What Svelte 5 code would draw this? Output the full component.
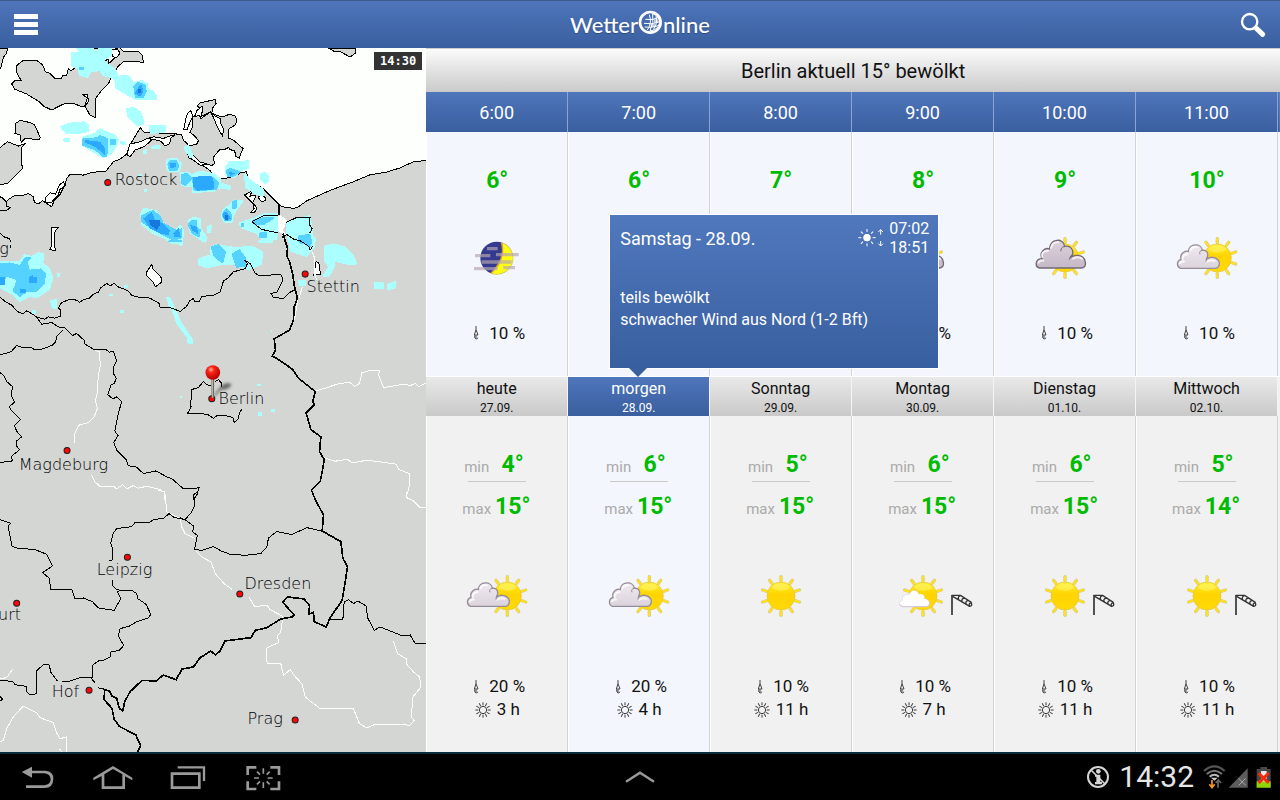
<script>
  const hours = [
    { time: '6:00', temp: '6°', sky: 'moon', rain: '10 %' },
    { time: '7:00', temp: '6°', sky: 'moon', rain: '10 %' },
    { time: '8:00', temp: '7°', sky: 'overcast', rain: '10 %' },
    { time: '9:00', temp: '8°', sky: 'overcast', rain: '10 %' },
    { time: '10:00', temp: '9°', sky: 'overcast', rain: '10 %' },
    { time: '11:00', temp: '10°', sky: 'cloudy', rain: '10 %' }
  ];

  const days = [
    { name: 'heute', date: '27.09.', min: '4°', max: '15°', sky: 'cloudy', rain: '20 %', sun: '3 h' },
    { name: 'morgen', date: '28.09.', min: '6°', max: '15°', sky: 'cloudy', rain: '20 %', sun: '4 h' },
    { name: 'Sonntag', date: '29.09.', min: '5°', max: '15°', sky: 'sunny', rain: '10 %', sun: '11 h' },
    { name: 'Montag', date: '30.09.', min: '6°', max: '15°', sky: 'fair', wind: true, rain: '10 %', sun: '7 h' },
    { name: 'Dienstag', date: '01.10.', min: '6°', max: '15°', sky: 'sunny', wind: true, rain: '10 %', sun: '11 h' },
    { name: 'Mittwoch', date: '02.10.', min: '5°', max: '14°', sky: 'sunny', wind: true, rain: '10 %', sun: '11 h' }
  ];

  const cities = [
    { name: 'Rostock', x: 344, y: 410, dx: 323, dy: 403 },
    { name: 'Stettin', x: 919, y: 733, dx: 915, dy: 678 },
    { name: 'Berlin', x: 655, y: 1066, dx: 635, dy: 1052 },
    { name: 'Magdeburg', x: 56, y: 1264, dx: 201, dy: 1207 },
    { name: 'Leipzig', x: 290, y: 1579, dx: 382, dy: 1527 },
    { name: 'Dresden', x: 733, y: 1621, dx: 719, dy: 1637 },
    { name: 'urt', x: -6, y: 1714, dx: 50, dy: 1665 },
    { name: 'Hof', x: 155, y: 1947, dx: 267, dy: 1926 },
    { name: 'Prag', x: 742, y: 2026, dx: 885, dy: 2015 }
  ];

  const rays = [0, 36, 72, 108, 144, 180, 216, 252, 288, 324];
  const rays8 = [0, 45, 90, 135, 180, 225, 270, 315];
  const rays12 = [0, 30, 60, 90, 120, 150, 180, 210, 240, 270, 300, 330];

  let selected = $state(1);
</script>

{#snippet sunShape(cx)}
  <g transform="translate({cx} 66)">
    {#each rays as r}
      <line y1="-46" y2="-58" stroke="#d8cb86" stroke-width="10" stroke-linecap="round" transform="rotate({r})" />
      <line y1="-44" y2="-58" stroke="#ffe21c" stroke-width="6" stroke-linecap="round" transform="rotate({r})" />
    {/each}
    <circle r="42" fill="url(#sun)" stroke="#e6c13c" stroke-width="2" />
    <ellipse cx="0" cy="-27" rx="26" ry="11" fill="#fff36a" opacity=".6" />
  </g>
{/snippet}

{#snippet sky(kind, wind)}
  <svg class="sky" viewBox="0 0 300 132" aria-hidden="true">
    {#if kind === 'sunny'}
      {@render sunShape(150)}
    {:else if kind === 'fair'}
      {@render sunShape(150)}
      <path d="M90 100C76 99 74 82 89 79C84 64 100 57 108 63C114 42 136 46 138 61C148 57 157 64 155 74C172 74 178 96 160 100Z" fill="#d9ccd6" />
      <path d="M90 96C78 95 76 82 90 79C85 66 100 58 108 64C114 44 135 48 137 62C148 58 156 65 154 75C169 75 174 93 160 96Z" fill="#fff" />
    {:else if kind === 'cloudy'}
      {@render sunShape(181)}
      <path d="M70 97C58 92 58 73 73 70C66 57 82 42 94 46C96 21 134 21 136 43C148 41 155 51 151 63L148 71C161 57 184 66 187 80C188 89 182 97 176 97Z" fill="url(#paleCloud)" stroke="#958c98" stroke-width="4" />
      <path d="M77 70Q75 57 92 54M100 43Q107 30 119 34M151 77Q164 69 173 75M69 82Q73 76 81 77" fill="none" stroke="#fff" stroke-width="6" stroke-linecap="round" opacity=".8" />
      <path d="M136 43Q125 45 129 55M151 63Q147 69 147 77" fill="none" stroke="#958c98" stroke-width="3" />
    {:else if kind === 'overcast'}
      {@render sunShape(150)}
      <path d="M73 96C59 93 60 68 81 68C72 50 88 33 103 39C107 6 145 5 149 31C167 27 176 41 173 55L165 65C187 51 211 60 211 81C213 89 207 96 199 96Z" fill="url(#greyCloud)" stroke="#726975" stroke-width="4" />
      <path d="M82 63Q77 46 99 44M108 36Q113 17 130 19M174 68Q191 60 201 68M71 80Q74 71 85 74" fill="none" stroke="#fff" stroke-width="6" stroke-linecap="round" opacity=".75" />
      <path d="M149 31Q136 34 138 46M172 56Q165 61 163 71" fill="none" stroke="#726975" stroke-width="3" />
    {:else}
      <circle cx="149" cy="66" r="49" fill="#353a91" />
      <path d="M164 20C205 33 211 89 172 109C158 117 144 116 132 112C160 90 172 60 164 20Z" fill="#fffc18" stroke="#d8cf54" stroke-width="2" />
      <path d="M164 20Q177 67 132 112" fill="none" stroke="#d9a21d" stroke-width="4" />
      <path d="M120 38H152M84 59H130M147 56H215M104 78H194M81 98H152M169 95H204" stroke="#b7a7af" stroke-width="10" opacity=".68" />
    {/if}
    {#if wind}
      <g fill="none" stroke="#333" stroke-width="4">
        <path d="M237 63V123" stroke-width="5" />
        <path d="M236 64H263L296 86M239 67L290 97M263 64Q253 68 257 77M274 72Q263 75 268 84M285 80Q275 82 280 91" />
        <path d="M295 86Q299 96 290 97Q285 89 295 86" />
      </g>
    {/if}
  </svg>
{/snippet}

{#snippet drop()}
  <svg class="drop" viewBox="0 0 18 42" aria-label="Niederschlag" role="img">
    <path d="M9 0V11L4 27H15L9 11M5 28Q4 38 9 39Q15 39 14 35M9 28V36" fill="none" stroke="#444" stroke-width="3" />
  </svg>
{/snippet}

{#snippet city(c)}
  <text x={c.x} y={c.y} class="city">{c.name}</text>
  <circle cx={c.dx} cy={c.dy} r="9" fill="#ff0505" stroke="#1d1d1d" stroke-width="3" />
{/snippet}

<svg class="defs" aria-hidden="true">
  <defs>
    <linearGradient id="sun" x2="0" y2="1">
      <stop offset="0" stop-color="#fff02a" />
      <stop offset=".45" stop-color="#ffd400" />
      <stop offset="1" stop-color="#ffd908" />
    </linearGradient>
    <linearGradient id="paleCloud" x2="0" y2="1">
      <stop offset="0" stop-color="#efe9ef" />
      <stop offset="1" stop-color="#dcd3dd" />
    </linearGradient>
    <linearGradient id="greyCloud" x2="0" y2="1">
      <stop offset="0" stop-color="#dcd2dc" />
      <stop offset="1" stop-color="#c5b8c7" />
    </linearGradient>
    <radialGradient id="ball" cx=".38" cy=".3" r=".7">
      <stop offset="0" stop-color="#ffb3a2" />
      <stop offset=".3" stop-color="#fb2718" />
      <stop offset="1" stop-color="#b40000" />
    </radialGradient>
    <filter id="soft" x="-50%" y="-50%" width="200%" height="200%"><feGaussianBlur stdDeviation="5" /></filter>
  </defs>
</svg>

<div class="app">
  <header class="topbar">
    <button class="menu" aria-label="Menü"><span></span><span></span><span></span></button>
    <h1 class="logo">
      <span>Wetter</span>
      <svg viewBox="0 0 75 78" aria-label="O" role="img">
        <circle cx="37" cy="40" r="31" fill="none" stroke="#fff" stroke-width="8" />
        <path d="M44 14Q66 22 64 43Q59 65 36 65Q49 40 44 14M22 31Q43 35 63 25M18 43Q42 48 65 38M20 54Q40 58 61 50M34 17Q43 43 28 63M54 20Q60 45 46 62" fill="none" stroke="#fff" stroke-width="3" />
        <path d="M48 31H60V42H48ZM38 44H52V54H38Z" fill="#fff" opacity=".6" />
      </svg>
      <span>nline</span>
    </h1>
    <button class="search" aria-label="Suche">
      <svg viewBox="0 0 78 78"><circle cx="29" cy="29" r="23" fill="none" stroke="#fff" stroke-width="7" /><path d="M50 50L68 67" stroke="#fff" stroke-width="15" stroke-linecap="round" /></svg>
    </button>
  </header>

  <main>
    <section class="map" aria-label="Regenradar">
      <svg viewBox="0 0 1278 2112" preserveAspectRatio="xMinYMin slice" shape-rendering="crispEdges">
        <rect width="1278" height="2112" fill="#fdfffd" />
        <!-- coast and islands -->
        <g transform="translate(0 -144)">
          <g fill="#d4d6d4" stroke="#000" stroke-width="3">
            <path d="M-5 588L8 592L18 605L30 595L45 586L68 586L85 580L100 590L103 607L114 612L128 602L140 610L155 620L163 600L180 583L195 553L200 535L210 523L250 525L275 517L318 513L328 500L340 485L360 477L380 462L388 438L415 392L421 383L432 397L525 401L545 405L550 421L563 432L560 455L567 474L600 490L630 512L650 537L656 553L663 536L700 531L722 518L738 515L745 535L760 547L790 566L835 612L845 620L880 625L895 620L920 602L990 571L1062 544L1110 524L1160 516L1198 504L1240 485L1283 481V2300H-5Z" />
            <path d="M-5 447L22 425L55 438L78 430L65 441V492L68 505L22 550L-5 555Z" />
            <path d="M45 400L46 371L60 361L92 368L104 375L121 413L117 419L75 415L64 427L60 405Z" />
            <path d="M50 197L67 183L110 181L128 195L136 215L150 220L165 235L182 237L190 225L200 227L205 205L213 213L228 200L221 185L235 184L240 196L252 180L263 195L270 172L280 195L300 187L325 178L331 215L322 218L332 233L326 250L305 270L285 298V352L270 346L255 318L240 318L218 309L190 312L155 330L130 318L119 306L80 282L45 268L35 252L44 242L63 241L50 218Z" />
            <path d="M232 144L250 165L325 170L333 144Z" />
            <path d="M330 187L318 195L323 212L345 214L354 199L372 184L410 184L430 188L427 167L417 156L395 153L372 156L359 142L335 150L345 172Z" />
            <path d="M984 144L1002 154L1022 156L1050 171L1067 158V144Z" />
            <path d="M-5 144H22L20 160L10 172L2 204L-5 205Z" />
            <path d="M592 318L600 308L625 303L646 298L648 310L638 323L635 340L656 348L672 349L689 342L705 348L710 359L706 374L684 388V414L700 420L718 436L729 446L723 457L718 475L706 468L704 452L690 449L686 442L672 449L659 448L640 471L643 491L635 496L603 488L585 476L572 458L565 438L590 432L595 422L583 407L570 397L578 378L577 350L593 343L603 327Z" />
          </g>
          <g fill="#fdfffd" stroke="#000" stroke-width="3">
            <path d="M562 340L572 332L578 348L568 370L560 390L551 388L557 357Z" />
            <path d="M606 319L590 332L584 350L598 346L602 356L632 335L642 357L652 382L667 408L671 387L662 371L660 356L643 347L632 335L602 350L608 330Z" />
            <path d="M385 445L390 432L420 425L448 413L455 420L432 440L405 450L390 470L382 465Z" />
            <path d="M447 416L460 410L490 415L512 407L524 404L512 415L509 430L495 438L483 424L470 420Z" />
            <path d="M565 441L572 452L579 466L600 486L620 491L601 496L571 474Z" />
            <path d="M167 582L178 555L190 545L196 555L180 568L175 583L155 606L137 606L138 590L151 578Z" />
            <path d="M154 682L175 681L165 694L164 738L167 752L150 748L155 737Z" />
            <path d="M248 284L262 284L266 304L254 318L262 294Z" />
            <path d="M333 150Q355 141 359 160Q351 178 338 169Z" />
            <path d="M733 585L755 573L750 588L768 585L758 608L771 624L762 638L752 637L762 625L758 609Z" />
            <path d="M774 592L783 583L795 592V602L784 605Z" />
            <path d="M439 817L455 793L459 806L485 834L484 847L466 860L459 846L440 826Z" />
            <path d="M948 784L956 788L961 822L941 826Z" />
          </g>
          <path d="M0 590L18 603L18 618L32 622L20 631L0 632M0 700L15 712L28 715L33 726M30 735V745" fill="none" stroke="#000" stroke-width="3" />
        </g>
        <!-- precipitation -->
        <g transform="translate(0 -144)" stroke-linejoin="round" stroke-width="6">
          <g fill="#aaffff" stroke="#aaffff">
            <path d="M230 144L250 160H215V195L235 205L240 225L262 230L270 215L300 210L310 225L330 230L350 242L352 222L340 205L318 190L310 180L333 165V144H298V152H278V144Z" />
            <path d="M347 238L362 228H385L400 250L425 243L440 252L443 270L458 274L468 290V296H405L380 282L347 262Z" />
            <path d="M381 327L402 323L420 337L428 360V372L412 375L385 350Z" />
            <path d="M449 378L494 378V394L452 399Z" />
            <path d="M184 380L207 371L250 367L265 376L263 393L240 398H200L188 388Z" />
            <path d="M250 412L285 402L300 388L320 397L345 406L353 420L348 436L335 458L310 472L290 460L248 435Z" />
            <path d="M193 417H207V423H193ZM362 427H374V433H365ZM455 440L478 438L479 443L458 445ZM432 452L439 451V459L432 460ZM418 525H424V529H418ZM434 570H438V573H434ZM553 441L565 438L577 466L572 471L556 450Z" />
            <path d="M501 482L510 477H530L542 492L537 512H505L500 500Z" />
            <path d="M541 520L560 517L575 525L600 515L640 522L660 537V550L689 559V566L650 562L642 572L578 576V558L546 556Z" />
            <path d="M678 500L690 486H720L745 483V504L725 509L700 532L679 524Z" />
            <path d="M734 522L745 537L787 568L790 586L770 582L738 562ZM783 522L795 518L805 530V543L795 549L784 540Z" />
            <path d="M424 640L432 626L468 633L490 670L525 692L540 678L550 690L544 735L510 720L458 698L425 672Z" />
            <path d="M565 662L580 653L599 657V685L618 710L616 725L605 720L572 698ZM624 680L632 678L630 697H623Z" />
            <path d="M666 650L668 632L692 612L702 601L727 603L707 630L697 650L695 665L675 667Z" />
            <path d="M719 670L755 658L790 643L832 643V698L827 717L790 723L770 698L728 683Z" />
            <path d="M860 668L890 658L927 648L934 680V705L944 715L942 740L918 767L873 752L861 698Z" />
            <path d="M973 740L1000 733L1033 742L1058 767L1068 790L1055 793L1002 782L1000 802L985 827L978 815L988 800L973 780Z" />
            <path d="M633 742L650 735L700 743L760 741L787 757L782 792L745 807L720 798L710 793L665 792L620 802L598 793V777L634 765Z" />
            <path d="M501 720H547L542 730H518ZM778 722H817V725H778ZM1125 848H1147V865H1125ZM1163 853L1184 846V862L1163 867ZM896 843H914V855H898ZM971 823H979V827H971Z" />
            <path d="M-2 785L60 785L75 765L95 771L115 759L129 762L127 790L147 805L157 835L147 867L110 892L90 887L60 902L37 880L-2 860Z" />
            <path d="M153 903L169 900L167 925L158 922ZM174 821H178V827H174ZM330 884H336V886H330ZM374 857H382V860H374ZM363 932H369V937H363ZM99 932H104V939H99Z" />
            <path d="M501 893H508L543 970L563 1000L577 1022V1028H565L562 1010L532 970L522 940L508 915Z" />
          </g>
          <path d="M770 1151H782V1156H770ZM539 1187H546V1193H539ZM773 1236H787V1246H773ZM812 1227H825V1234H812ZM812 990H816V996H812Z" fill="#aaffff" />
          <g fill="#55d2ff" stroke="#55d2ff">
            <path d="M403 260L415 248L435 257L437 275L428 291H407ZM239 205H250V208H239ZM250 417L290 415L300 408L322 417V450L318 467H307L287 448L250 435ZM333 420L345 419V431L333 433Z" />
            <path d="M505 492L512 483H528L535 497L530 509H509ZM545 525L560 521L575 535L555 554L545 550ZM578 533H638L654 550L648 567L583 570ZM681 512L690 506L717 516L700 527H683Z" />
            <path d="M427 647L458 633L478 647L488 670L528 692L544 688V712L520 719L462 688L427 665ZM565 672L575 663H587V680L599 690L596 709L577 698ZM667 642L680 628L694 645V658L675 661ZM698 605L707 603V623L698 624Z" />
            <path d="M759 662L790 654H819L790 672H765ZM781 698H797V712H781ZM898 708L928 705L932 720L930 742L915 729L898 727ZM725 671H730V677H725Z" />
            <path d="M635 742L655 735L675 755L667 787L643 768ZM698 762L718 751L735 775V797L710 800ZM508 722H542V724H508ZM-2 793L30 790L60 798L77 773L91 773L80 785L87 812L123 808L135 820L132 848L108 872H80L60 887L41 873L53 838L20 827L-2 852Z" />
          </g>
          <g fill="#2aa9ff">
            <path d="M410 268L424 253L430 275L420 290L405 280ZM255 420L300 425L315 445V465L285 440L255 428ZM508 490H528V500L512 506ZM580 530L635 527L642 550L640 568L590 572L580 560ZM685 515L705 520L690 528Z" />
            <path d="M430 655L455 635L465 660L490 670L510 690L505 705L480 700L450 685ZM520 700L535 682L542 710H522ZM570 675L590 680L595 702L575 690ZM670 638L680 635L692 655L680 665L670 655Z" />
            <path d="M-2 830H15V855H-2ZM87 830L98 825V830H112V850H87ZM60 866H78V878H60Z" />
          </g>
          <path d="M445 660H480V675L470 690L452 675ZM675 645H685V660H675ZM415 266H424V278H415Z" fill="#1678dc" />
          <path d="M834 648L842 645L860 661L849 690L857 703L850 716L845 700L833 693Z" fill="#fdfffd" />
        </g>
        <!-- rivers and foreign regions -->
        <g fill="none" stroke="#fdfffd" stroke-width="3">
          <path transform="translate(0 576)" d="M280 328L297 335L301 375L295 405L291 460L286 482L292 505L282 530L265 547L236 555L222 585V607M274 705L285 725L302 740L340 738L350 746L368 733L380 746L400 736L415 744L440 738L478 747L494 757V780M930 22L942 50V100L950 120M907 140L896 175M893 180L883 240M948 452L975 444L1010 432L1048 426L1063 438L1078 430L1085 398L1110 391H1138L1135 405L1150 442L1210 432L1230 436L1245 430L1255 440L1278 428M970 652L1005 663L1042 657L1055 668L1100 660L1140 665L1188 672L1196 688L1228 700V735L1218 770L1230 780" />
          <path transform="translate(0 1326)" d="M474 0L494 5L500 65L540 85L545 110L555 130L585 145M588 182L605 200L633 215L645 250L672 280L695 297M746 320L763 348L802 346L810 358L848 378L842 425L832 435L835 457L800 473L798 510L803 520L842 520L850 555L870 538L882 555L905 580L915 620L960 655L1060 655L1078 700L1100 713L1122 703L1230 704L1242 690L1233 680L1238 620L1262 590L1258 560L1240 545L1218 520V505L1192 490L1180 453M0 755L10 750L20 715L40 680L70 647L110 667L120 682L160 697L170 728L180 745L198 740V790M0 565L20 562L38 536M178 775L190 790M1218 5V20L1240 32L1260 52H1278" />
        </g>
        <!-- state borders -->
        <g fill="none" stroke="#000" stroke-width="3">
          <path transform="translate(0 576)" d="M0 171L18 186L35 195L52 214L68 221L80 212L96 221L110 231L135 237L145 230L165 234L181 228L183 210L175 204L184 188L207 178L231 180L238 187L252 178L267 175L279 163L295 156L303 142L320 130L330 137L342 130L356 141L382 151L396 166L408 170L450 174L478 190L480 201L507 202L525 208L540 214L558 200L570 181L580 175L585 185L598 184L605 168L638 167L660 155L670 123L684 113L700 95L735 86L742 70L733 60L750 70L765 99L775 105L805 107L820 102L845 105L847 123L830 156L812 160L820 172L850 175L870 156L887 148" />
          <path transform="translate(0 576)" d="M110 231L125 252L155 247L180 263L195 263L217 286L230 280L252 300L255 312L280 327H316L328 336L340 334L350 362L341 378V402L349 415L342 430L333 435L323 463L338 476L350 470L365 485L355 518L350 545L344 572L354 586L341 607L350 630L378 658L384 676L410 681L430 700L468 692L500 710L515 715L548 744L580 745L597 742L590 765L578 780" />
          <path transform="translate(0 576)" d="M188 270L170 288L167 305L157 315L130 326L105 329L93 322H66L50 316L33 335L0 344M0 397L12 407L20 424L38 440L33 465L44 485L28 500L35 512L62 538L43 556L50 573L65 590L50 602V618L59 628L35 648L37 662L0 667M632 436L620 434L610 424L595 442L575 448V470L570 490L573 500L562 520L600 519L625 524L640 535L652 525L680 527L698 532L702 547L715 535L718 518L725 508M645 425L655 418L665 430V440" />
          <path transform="translate(0 1326)" d="M597 0L580 14L584 45L575 65L555 88L523 82L507 70L490 84L460 88L447 98L405 97L395 109L350 115L340 128L332 158L338 175V208L328 212M338 270V287L350 299L395 300L410 310L413 325L438 342L452 372L445 383L410 394L387 408L360 415L355 435L362 450L371 465L358 480L333 485L330 500L310 510L295 512L277 525V562L236 563L210 572L185 572M540 82L557 90L580 107L578 125L592 135L583 178L607 180L640 169L665 183L690 192L735 195L782 190L800 170L805 143L830 124L875 133L920 112L962 122M0 88L32 99L24 108L36 168L50 173L105 178L140 192L157 227L128 247L148 264L152 297L215 297L225 326L250 323L277 334L295 353L342 360L362 325L352 305L360 299M0 570L38 573L45 583L80 588V604L90 614L108 610V543L130 523L148 524L152 545L172 572M270 560L285 577M293 592L315 597M990 388H1028L1032 335L1045 328L1060 340L1073 332L1098 347L1102 382L1122 420L1140 410L1205 436L1230 434L1245 460L1278 458M0 618L8 626L0 632" />
          <path transform="translate(0 -144)" d="M755 665L790 647L835 646M755 665L785 688L832 698M858 667L890 652L930 652L927 673L936 686L928 700M845 712L860 703L880 717L900 722L925 738L930 750L938 738" />
        </g>
        <!-- national borders -->
        <path d="M836 470V500M848 556L862 600L860 624L868 640L878 680L882 710L892 750L882 776L880 815L868 846L822 872L826 906L816 924L832 932L878 964L895 990L945 1030L938 1058L942 1070L918 1094L932 1144L962 1166L958 1210L972 1234L968 1260L960 1300L934 1326L946 1356L970 1400L966 1448L1022 1480L1028 1530L1042 1556L1032 1620L1026 1656L990 1708L978 1736L942 1720L940 1692L926 1698L928 1672L912 1652L862 1646L848 1662L882 1700L876 1706L842 1712L800 1738L766 1746L752 1768L674 1778L660 1808L646 1820L632 1808L600 1828L580 1856L546 1862L528 1894L490 1880L468 1898L426 1896L390 1930L374 1960L368 1988L358 1980L350 1950L336 1944L328 1928L314 1924L312 1954L336 1980L342 2012L358 2034L408 2060L414 2076L422 2090L412 2112" fill="none" stroke="#000" stroke-width="5" />
        <text x="-2" y="617" class="city">g</text>
        <g shape-rendering="auto">
          {#each cities as c}{@render city(c)}{/each}
          <path d="M638 1052Q648 1025 670 1008Q690 1000 694 1010Q687 1026 662 1025Z" fill="#000" opacity=".5" filter="url(#soft)" />
          <path d="M638 990V1050" stroke="#6e6c5e" stroke-width="8" /><path d="M637 990V1048" stroke="#b9b9aa" stroke-width="3" />
          <circle cx="638" cy="973" r="22" fill="url(#ball)" />
        </g>
      </svg>
      <time class="stamp">14:30</time>
    </section>

    <section class="forecast">
      <h2>Berlin aktuell 15° bewölkt</h2>
      <table class="hours">
        <thead>
          <tr>{#each hours as h}<th scope="col">{h.time}</th>{/each}</tr>
        </thead>
        <tbody>
          <tr class="h-temp">{#each hours as h}<td class="temp">{h.temp}</td>{/each}</tr>
          <tr class="h-sky">{#each hours as h}<td>{@render sky(h.sky, false)}</td>{/each}</tr>
          <tr class="h-rain">{#each hours as h}<td><div class="fact rain">{@render drop()}{h.rain}</div></td>{/each}</tr>
        </tbody>
      </table>

      <table class="days">
        <thead>
          <tr>
            {#each days as d, i}
              <th scope="col" class:on={selected === i}>
                <button onclick={() => (selected = i)}>{d.name}<small>{d.date}</small></button>
                {#if i === 1 && selected === 1}
                  <div class="tip">
                    <div class="tip-head">
                      <span class="tip-day">Samstag - 28.09.</span>
                      <svg viewBox="0 0 81 60" aria-hidden="true">
                        <g transform="translate(27 32)" stroke="#fff" stroke-width="3">
                          <circle r="10" fill="#fff" />
                          {#each rays8 as r}<line y1="-17" y2="-26" transform="rotate({r})" />{/each}
                        </g>
                        <path d="M68 23V8M61 15L68 8L75 15M68 42V57M61 50L68 57L75 50" fill="none" stroke="#fff" stroke-width="3" />
                      </svg>
                      <span class="tip-sun">07:02<br />18:51</span>
                    </div>
                    <p>teils bewölkt<br />schwacher Wind aus Nord (1-2 Bft)</p>
                  </div>
                {/if}
              </th>
            {/each}
          </tr>
        </thead>
        <tbody>
          <tr class="d-min">{#each days as d, i}<td class:on={selected === i}><div class="pair"><span>min</span><b class="temp">{d.min}</b></div><hr /></td>{/each}</tr>
          <tr class="d-max">{#each days as d, i}<td class:on={selected === i}><div class="pair"><span>max</span><b class="temp">{d.max}</b></div></td>{/each}</tr>
          <tr class="d-sky">{#each days as d, i}<td class:on={selected === i}>{@render sky(d.sky, d.wind)}</td>{/each}</tr>
          <tr class="d-rain">{#each days as d, i}<td class:on={selected === i}><div class="fact rain">{@render drop()}{d.rain}</div></td>{/each}</tr>
          <tr class="d-sun">
            {#each days as d, i}
              <td class:on={selected === i}>
                <div class="fact">
                  <svg class="sunny" viewBox="0 0 48 48" aria-label="Sonnenstunden" role="img">
                    <g transform="translate(24 24)" fill="none" stroke="#3d3d3d" stroke-width="3">
                      <circle r="11" />
                      {#each rays12 as r}<line y1="-14" y2="-23" transform="rotate({r})" />{/each}
                    </g>
                  </svg>{d.sun}
                </div>
              </td>
            {/each}
          </tr>
        </tbody>
      </table>
    </section>
  </main>

  <footer>
    <nav>
      <button aria-label="Zurück"><svg viewBox="0 0 120 96"><path d="M11 33L42 17V29H82Q106 31 106 53Q105 81 80 81H24V73H80Q97 71 98 55Q97 39 80 37H42V50Z" fill="#9a9a9a" /></svg></button>
      <button aria-label="Startseite"><svg viewBox="0 0 120 96"><path d="M1 58V50L60 15L118 50V58L96 46V84H26V45ZM34 40V76H88V40L60 24Z" fill="#9a9a9a" fill-rule="evenodd" /></svg></button>
      <button aria-label="Letzte Apps"><svg viewBox="0 0 120 96"><path d="M12 38H94V80H12Z" fill="none" stroke="#9a9a9a" stroke-width="8" /><path d="M29 19H108V60" fill="none" stroke="#9a9a9a" stroke-width="7" /></svg></button>
      <button aria-label="Bildschirmfoto"><svg viewBox="0 0 120 96"><path d="M40 19H14V42M82 19H108V42M40 84H14V61M82 84H108V61" fill="none" stroke="#9a9a9a" stroke-width="8" /><path d="M61 22V38M61 64V81M33 51H48M74 51H89M42 32L51 41M80 32L71 41M42 70L51 61M80 70L71 61" stroke="#9a9a9a" stroke-width="5" /></svg></button>
    </nav>
    <button class="up" aria-label="Leiste öffnen"><svg viewBox="0 0 120 96"><path d="M18 62L60 35L102 62" fill="none" stroke="#9a9a9a" stroke-width="7" /></svg></button>
    <div class="status">
      <svg class="info" viewBox="0 0 72 72" aria-hidden="true">
        <circle cx="36" cy="36" r="30" fill="none" stroke="#d6d6d6" stroke-width="6" />
        <path d="M15 15L57 57" stroke="#d6d6d6" stroke-width="5" />
        <circle cx="37" cy="19" r="7" fill="#d6d6d6" />
        <path d="M27 29H43V51H48V58H27V51H31V35H27Z" fill="#d6d6d6" />
      </svg>
      <time>14:32</time>
      <svg class="signals" viewBox="0 0 204 72" aria-hidden="true">
        <g fill="none" stroke-width="6"><path d="M3 18Q34 -10 65 18" stroke="#555" /><path d="M11 27Q34 7 57 27" stroke="#777" /><path d="M20 35Q34 24 48 35" stroke="#bbb" /></g>
        <path d="M24 38H44L34 47Z" fill="#ccc" />
        <path d="M27 45V64M19 58L27 68L35 58" stroke="#f59a22" stroke-width="5" fill="none" />
        <path d="M45 68V48M38 54L46 45L54 54" stroke="#666" stroke-width="5" fill="none" />
        <path d="M77 68H134V10Z" fill="#5d5d5d" /><path d="M107 40L128 61M128 40L107 61" stroke="#aaa" stroke-width="3" />
        <path d="M172 6H192V12H203V68H161V12H172Z" fill="#484848" /><path d="M161 49H203V68H161Z" fill="#8fd600" />
        <path d="M174 18H191V50H174Z" fill="#e8e8e8" /><path d="M167 25L197 54M197 24L167 54" stroke="#f42b0a" stroke-width="9" />
      </svg>
    </div>
  </footer>
</div>

<style>
  :global(body) { margin: 0; }
  .defs { position: absolute; width: 0; height: 0; }
  .app { display: flex; flex-direction: column; min-height: 100vh; font-family: Roboto, sans-serif; font-size: 17px; color: #111; }
  button { border: 0; margin: 0; padding: 0; background: none; font: inherit; color: inherit; cursor: pointer; }
  svg { display: block; }

  .topbar { display: grid; grid-template-columns: 1fr auto 1fr; align-items: center; height: 48px; box-sizing: border-box; padding: 0 14px; border-top: 1px solid #3f5a8c; background: linear-gradient(#4f75bb, #395f9f); }
  .menu { display: flex; flex-direction: column; gap: 3px; width: 24px; }
  .menu span { height: 5px; background: #fff; }
  .logo { display: flex; align-items: center; margin: 0; color: #fff; font: 500 22px/28px Lato, sans-serif; text-shadow: 0 1px 1px #2c4a80; }
  .logo svg { width: 25px; height: 26px; margin-bottom: 6px; }
  .search { justify-self: end; }
  .search svg { width: 26px; height: 26px; }

  main { display: grid; grid-template-columns: 33.3% 1fr; flex: 1; }
  .map { position: relative; overflow: hidden; min-height: 704px; background: #d4d6d4; }
  .map > svg { width: 100%; height: 100%; position: absolute; inset: 0; }
  .city { font: 200 48px "DejaVu Sans Light", "DejaVu Sans", sans-serif; fill: #000; }
  .stamp { position: absolute; top: 4px; right: 4px; padding: 0 6px; background: #333; color: #fff; font: 700 12px/18px "DejaVu Sans Mono", monospace; }

  .forecast { background: #f1f1f1; }
  h2 { margin: 0; box-sizing: border-box; height: 44px; border-top: 1px solid #ccc; background: linear-gradient(#fbfbfb, #cacaca); font-size: 20px; font-weight: 400; line-height: 44px; text-align: center; }
  table { width: 100%; table-layout: fixed; border-collapse: separate; border-spacing: 0; padding-right: 2px; }
  th, td { padding: 0; box-sizing: border-box; text-align: center; font-weight: 400; }
  td { border-left: 1px solid #fff; border-right: 1px solid #d3d3d3; }
  .temp { color: #00bb00; font-size: 23px; font-weight: 700; line-height: 28px; }

  .hours { background: linear-gradient(#4f75bb, #395f9f) top / 100% 40px no-repeat, #f3f6fc; border-bottom: 1px solid #fff; }
  .hours th { height: 40px; border-right: 1px solid #8ba4d3; color: #fff; font-size: 18px; }
  .h-temp td { height: 96px; padding-top: 2px; }
  .h-sky td { height: 60px; }
  .h-rain td { height: 88px; padding-top: 2px; }
  .sky { width: 100px; height: 44px; margin: 0 auto; }
  .fact { display: flex; justify-content: center; align-items: center; gap: 6px; line-height: 23px; }
  .rain { gap: 10px; padding-left: 4px; }
  .drop { width: 6px; height: 14px; }
  .sunny { width: 16px; height: 16px; }

  .days th { position: relative; height: 39px; border-right: 1px solid #f4f4f4; background: linear-gradient(#e9e9e9, #c9c9c9); }
  .days th.on { color: #fff; background: linear-gradient(#4f75bb, #395f9f); }
  .days button { display: block; width: 100%; height: 39px; padding-top: 2px; font-size: 16px; line-height: 20px; }
  .days small { display: block; font-size: 12px; line-height: 18px; }
  .days td.on { background: #f3f6fc; }
  .d-min td { height: 66px; vertical-align: bottom; }
  .d-max td { height: 58px; vertical-align: top; padding-top: 11px; }
  .d-sky td { height: 112px; }
  .d-rain td { height: 46px; vertical-align: bottom; }
  .d-sun td { height: 54px; vertical-align: top; }
  .pair { display: grid; grid-template-columns: 30px 40px; gap: 1px; justify-content: center; align-items: baseline; }
  .pair span { color: #aaa; font-size: 15px; }
  hr { width: 58px; height: 1px; margin: 2px auto 0; border: 0; background: #c9c9c9; }

  .tip { position: absolute; z-index: 2; left: 42px; bottom: 48px; box-sizing: border-box; width: 328px; height: 153px; padding: 4px 9px 0 10px; outline: 1px solid #fff; background: linear-gradient(#5078bd, #385f9f); color: #fff; text-align: left; }
  .tip::after { content: ""; position: absolute; top: 100%; left: 19px; border: 9px solid transparent; border-top-color: #395f9f; border-bottom: 0; }
  .tip-head { display: flex; align-items: flex-start; }
  .tip-day { flex: 1; font-size: 18px; line-height: 40px; }
  .tip-head svg { width: 27px; height: 20px; margin: 8px 4px 0 0; }
  .tip-sun { font-size: 16px; line-height: 19px; }
  .tip p { margin: 28px 0 0; font-size: 16px; line-height: 22px; white-space: nowrap; }

  footer { display: grid; grid-template-columns: 1fr auto 1fr; align-items: center; height: 48px; box-sizing: border-box; border-top: 2px solid #0b2c3c; background: #000; }
  nav { display: flex; }
  footer button { width: 75px; height: 46px; }
  footer button svg { width: 40px; height: 32px; margin: 0 auto; }
  .status { display: flex; justify-self: end; align-items: center; padding-right: 9px; color: #e6e6e6; font-size: 30px; line-height: 46px; }
  .info { width: 24px; height: 24px; margin-right: 9px; }
  .signals { width: 68px; height: 24px; margin-left: 9px; }
</style>
